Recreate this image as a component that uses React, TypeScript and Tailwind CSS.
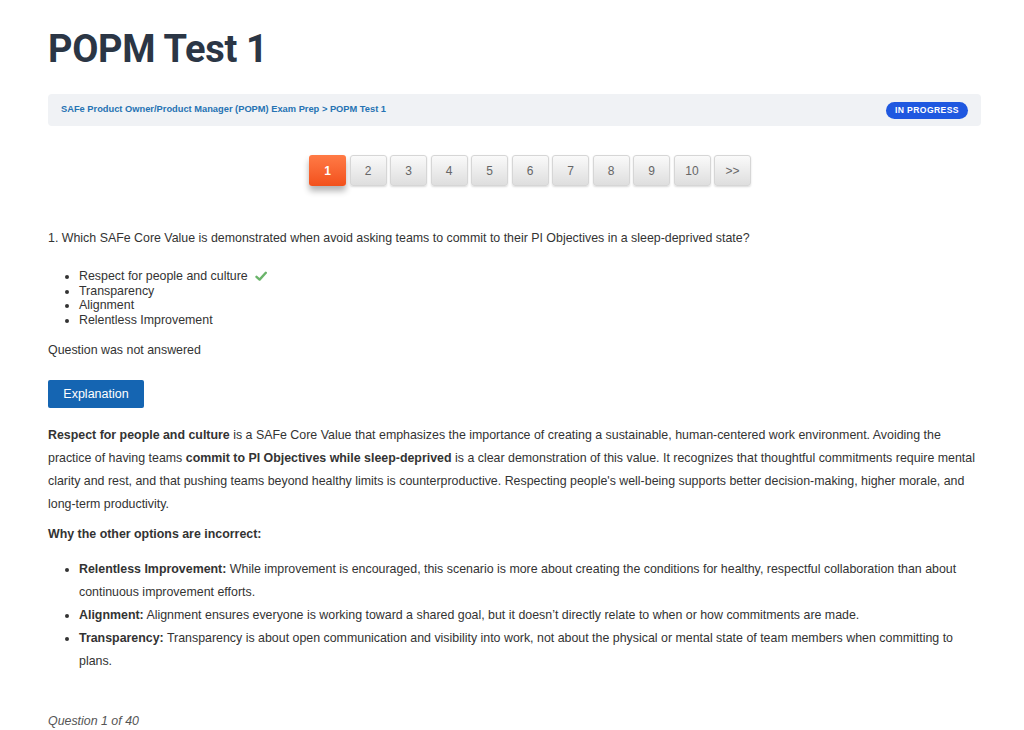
import React from 'react';

const pages = ['1', '2', '3', '4', '5', '6', '7', '8', '9', '10', '>>'];

function Check() {
  return (
    <svg width="12" height="10" viewBox="0 0 12 10" className="inline-block ml-[7px] -mt-[2px]">
      <path d="M1.5 5.8 L4.6 8.6 L10.8 1.8" fill="none" stroke="#6ab46a" strokeWidth="2.4" strokeLinecap="round" strokeLinejoin="round" />
    </svg>
  );
}

export default function App() {
  return (
    <div className="w-[1024px] h-[730px] bg-white overflow-hidden text-[#333] font-['Liberation_Sans',Arial,sans-serif]">
      <div className="px-[48px] pt-[26px]">
        <h1 className="font-['Roboto',sans-serif] font-bold text-[38px] leading-[46px] text-[#2b3645] tracking-[-0.3px]">
          POPM Test 1
        </h1>

        <div className="mt-[22px] w-[933px] h-[32px] rounded-[4px] bg-[#f0f2f5] flex items-center justify-between pl-[13px] pr-[13px]">
          <span className="text-[9.3px] font-bold text-[#2673b3]">
            SAFe Product Owner/Product Manager (POPM) Exam Prep &gt; POPM Test 1
          </span>
          <span className="h-[17px] px-[9px] rounded-full bg-[#1f58e0] text-white text-[8.6px] font-bold tracking-[0.4px] flex items-center">
            IN PROGRESS
          </span>
        </div>

        <div className="mt-[29px] flex justify-center gap-[3.5px] pl-[36px]">
          {pages.map((p, i) => (
            <div
              key={p}
              className={
                i === 0
                  ? 'w-[37px] h-[31px] rounded-[3px] flex items-center justify-center text-[12px] font-bold text-white bg-gradient-to-b from-[#ff7a45] to-[#f2501a] shadow-[0_5px_6px_rgba(0,0,0,0.3)]'
                  : 'w-[37px] h-[31px] rounded-[3px] flex items-center justify-center text-[12px] text-[#666] bg-gradient-to-b from-[#fafafa] to-[#dedede] border border-[#d6d6d6] shadow-[0_1px_2px_rgba(0,0,0,0.15)]'
              }
            >
              {p}
            </div>
          ))}
        </div>

        <p className="mt-[44px] text-[12.4px] leading-[16px]">
          1. Which SAFe Core Value is demonstrated when avoid asking teams to commit to their PI Objectives in a sleep-deprived state?
        </p>

        <ul className="mt-[23px] list-disc pl-[31px] text-[12.4px] leading-[14.5px]">
          <li>
            Respect for people and culture
            <Check />
          </li>
          <li>Transparency</li>
          <li>Alignment</li>
          <li>Relentless Improvement</li>
        </ul>

        <p className="mt-[15px] text-[12.4px] leading-[16px]">Question was not answered</p>

        <button className="mt-[22px] w-[96px] h-[28px] rounded-[2px] bg-[#1565b2] text-white text-[12.5px] flex items-center justify-center">
          Explanation
        </button>

        <p className="mt-[16px] text-[12.4px] leading-[23px] w-[932px]">
          <b>Respect for people and culture</b> is a SAFe Core Value that emphasizes the importance of creating a sustainable, human-centered work environment. Avoiding the practice of having teams <b>commit to PI Objectives while sleep-deprived</b> is a clear demonstration of this value. It recognizes that thoughtful commitments require mental clarity and rest, and that pushing teams beyond healthy limits is counterproductive. Respecting people's well-being supports better decision-making, higher morale, and long-term productivity.
        </p>

        <p className="mt-[7px] text-[12.4px] leading-[23px] font-bold">Why the other options are incorrect:</p>

        <ul className="mt-[12px] list-disc pl-[31px] text-[12.4px] leading-[23px] w-[932px]">
          <li>
            <b>Relentless Improvement:</b> While improvement is encouraged, this scenario is more about creating the conditions for healthy, respectful collaboration than about continuous improvement efforts.
          </li>
          <li>
            <b>Alignment:</b> Alignment ensures everyone is working toward a shared goal, but it doesn’t directly relate to when or how commitments are made.
          </li>
          <li>
            <b>Transparency:</b> Transparency is about open communication and visibility into work, not about the physical or mental state of team members when committing to plans.
          </li>
        </ul>

        <p className="mt-[39px] text-[12.4px] italic text-[#555]">Question 1 of 40</p>
      </div>
    </div>
  );
}
